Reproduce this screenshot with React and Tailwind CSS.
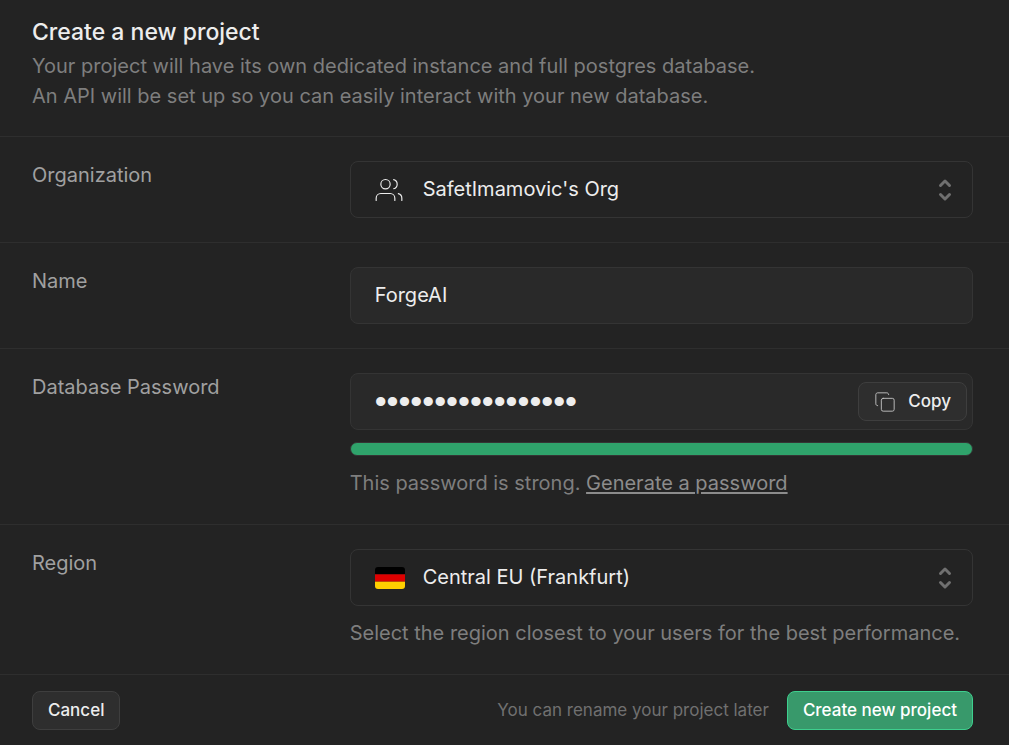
import { Copy } from "lucide-react";

function UsersIcon() {
  return (
    <svg
      aria-hidden="true"
      className="size-7 shrink-0"
      viewBox="0 0 24 24"
      fill="none"
      stroke="currentColor"
      strokeWidth="1"
      strokeLinecap="round"
      strokeLinejoin="round"
    >
      <path d="M17 21v-2a4 4 0 0 0-4-4H5a4 4 0 0 0-4 4v2" />
      <circle cx="9" cy="7" r="4" />
      <path d="M23 21v-2a4 4 0 0 0-3-3.87" />
      <path d="M16 3.13a4 4 0 0 1 0 7.75" />
    </svg>
  );
}

function SelectorIcon() {
  return (
    <svg
      aria-hidden="true"
      className="size-[30px] shrink-0 text-[#707070]"
      viewBox="0 0 20 20"
      fill="currentColor"
    >
      <path
        fillRule="evenodd"
        clipRule="evenodd"
        d="M10 3a1 1 0 01.707.293l3 3a1 1 0 01-1.414 1.414L10 5.414 7.707 7.707a1 1 0 01-1.414-1.414l3-3A1 1 0 0110 3zm-3.707 9.293a1 1 0 011.414 0L10 14.586l2.293-2.293a1 1 0 011.414 1.414l-3 3a1 1 0 01-1.414 0l-3-3a1 1 0 010-1.414z"
      />
    </svg>
  );
}

function GermanFlag() {
  return (
    <svg aria-hidden="true" className="h-[22px] w-[30px] shrink-0 rounded-[3px]" viewBox="0 0 30 22" preserveAspectRatio="none">
      <rect width="30" height="7.33" fill="#000" />
      <rect y="7.33" width="30" height="7.34" fill="#d00" />
      <rect y="14.67" width="30" height="7.33" fill="#ffce00" />
    </svg>
  );
}

function Row({ label, htmlFor, children }) {
  return (
    <div className="grid grid-cols-3 gap-3 border-t border-[#2e2e2e] py-6 pr-9 pl-8">
      <label htmlFor={htmlFor} className="self-start text-xl leading-7 text-[#a0a0a0]">
        {label}
      </label>
      <div className="col-span-2">{children}</div>
    </div>
  );
}

function SelectBox({ id, icon, value }) {
  return (
    <div className="grid h-[57px] grid-cols-1 items-center rounded-lg border border-[#343434] text-[#ededed]">
      <span className="pointer-events-none col-start-1 row-start-1 flex items-center justify-between pr-3 pl-6">
        {icon}
        <SelectorIcon />
      </span>
      <select
        id={id}
        defaultValue={value}
        className="col-start-1 row-start-1 h-full w-full appearance-none rounded-lg bg-transparent pr-12 pb-0.5 pl-[72px] text-xl outline-none"
      >
        <option className="bg-[#232323]">{value}</option>
      </select>
    </div>
  );
}

export default function App() {
  return (
    <main className="min-h-screen bg-[#232323] font-['Inter','Liberation_Sans',sans-serif]">
      <form onSubmit={(e) => e.preventDefault()}>
        <header className="pt-4 pr-9 pb-6 pl-8">
          <h1 className="text-[23px] leading-8 font-medium text-[#ededed]">Create a new project</h1>
          <p className="pt-[3px] pb-px text-xl leading-[30px] text-[#7e7e7e]">
            Your project will have its own dedicated instance and full postgres database.
            <br />
            An API will be set up so you can easily interact with your new database.
          </p>
        </header>

        <Row label="Organization" htmlFor="organization">
          <SelectBox id="organization" icon={<UsersIcon />} value="SafetImamovic's Org" />
        </Row>

        <Row label="Name" htmlFor="name">
          <input
            id="name"
            type="text"
            defaultValue="ForgeAI"
            className="block h-[57px] w-full rounded-lg border border-[#343434] bg-[#292929] px-6 pb-0.5 text-xl text-[#ededed] outline-none"
          />
        </Row>

        <Row label="Database Password" htmlFor="password">
          <div className="flex h-[57px] items-center rounded-lg border border-[#343434] bg-[#292929] pr-[5px]">
            <input
              id="password"
              type="password"
              defaultValue="correcthorsebatte"
              className="h-full min-w-0 flex-1 bg-transparent pl-6 font-['Liberation_Sans',sans-serif] text-[34px] text-[#ededed] outline-none"
            />
            <button
              type="button"
              className="flex h-[39px] items-center gap-3 rounded-lg border border-[#3e3e3e] bg-[#2e2e2e] px-[15px] text-[17px] font-medium text-[#ededed]"
            >
              <Copy aria-hidden="true" className="size-[22px] text-[#c4c4c4]" strokeWidth={1} />
              Copy
            </button>
          </div>
          <div className="mt-3 h-[14px] rounded-full border border-[#343434] bg-[#2fa36b]" />
          <p className="mt-3 pb-0.5 text-xl leading-[30px] text-[#7e7e7e]">
            This password is strong.{" "}
            <a href="#generate" className="text-[#8c8c8c] underline decoration-2 underline-offset-2">
              Generate a password
            </a>
          </p>
        </Row>

        <Row label="Region" htmlFor="region">
          <SelectBox id="region" icon={<GermanFlag />} value="Central EU (Frankfurt)" />
          <p className="mt-3 pb-0.5 text-xl leading-[30px] text-[#7e7e7e]">
            Select the region closest to your users for the best performance.
          </p>
        </Row>

        <footer className="flex items-center justify-between border-t border-[#2e2e2e] pt-4 pr-9 pb-3 pl-8">
          <button
            type="button"
            className="h-[39px] rounded-lg border border-[#3e3e3e] bg-[#2e2e2e] px-[15px] text-[17px] font-medium text-[#ededed]"
          >
            Cancel
          </button>
          <div className="flex items-center gap-[18px]">
            <span className="text-[17px] text-[#707070]">You can rename your project later</span>
            <button
              type="submit"
              className="h-[39px] rounded-lg border border-[#3ecf8e] bg-[#38996b] px-[15px] text-[17px] font-medium text-white"
            >
              Create new project
            </button>
          </div>
        </footer>
      </form>
    </main>
  );
}
